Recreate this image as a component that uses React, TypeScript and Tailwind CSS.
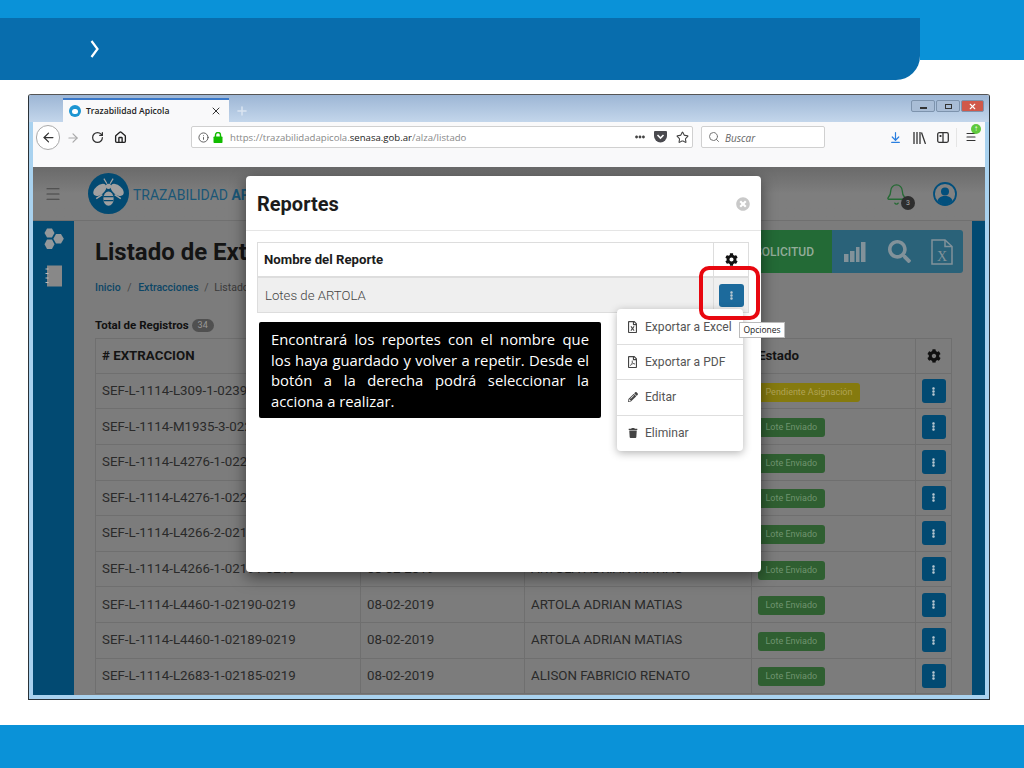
import React from "react";
import { ArrowLeft, ArrowRight, RotateCw, Home, Info, Star, Search, ArrowDownToLine, Plus, X, Bell, Menu } from "lucide-react";
import { FaCog, FaSearch, FaEllipsisV, FaPencilAlt, FaTrash, FaRegFileExcel, FaRegFilePdf, FaTimesCircle, FaEllipsisH } from "react-icons/fa";

const rows = [
  ["SEF-L-1114-L309-1-02391-0219", "08-02-2019", "ARTOLA ADRIAN MATIAS", "Pendiente Asignación"],
  ["SEF-L-1114-M1935-3-02280-0219", "08-02-2019", "ARTOLA ADRIAN MATIAS", "Lote Enviado"],
  ["SEF-L-1114-L4276-1-02211-0219", "08-02-2019", "ARTOLA ADRIAN MATIAS", "Lote Enviado"],
  ["SEF-L-1114-L4276-1-02210-0219", "08-02-2019", "ARTOLA ADRIAN MATIAS", "Lote Enviado"],
  ["SEF-L-1114-L4266-2-02192-0219", "08-02-2019", "ARTOLA ADRIAN MATIAS", "Lote Enviado"],
  ["SEF-L-1114-L4266-1-02191-0219", "08-02-2019", "ARTOLA ADRIAN MATIAS", "Lote Enviado"],
  ["SEF-L-1114-L4460-1-02190-0219", "08-02-2019", "ARTOLA ADRIAN MATIAS", "Lote Enviado"],
  ["SEF-L-1114-L4460-1-02189-0219", "08-02-2019", "ARTOLA ADRIAN MATIAS", "Lote Enviado"],
  ["SEF-L-1114-L2683-1-02185-0219", "08-02-2019", "ALISON FABRICIO RENATO", "Lote Enviado"],
];

function Bee() {
  return (
    <svg width="41" height="41" viewBox="0 0 40 40" className="shrink-0">
      <circle cx="20" cy="20" r="20" fill="#024a72" />
      <g fill="#a0a0a0">
        <ellipse cx="11.500" cy="16.500" rx="7.500" ry="4.500" transform="rotate(-40 11.500 16.500)" />
        <ellipse cx="28.500" cy="16.500" rx="7.500" ry="4.500" transform="rotate(40 28.500 16.500)" />
        <circle cx="20" cy="13" r="2.600" />
        <ellipse cx="20" cy="25" rx="5" ry="7" />
      </g>
      <path d="M15 23h10M15.500 27h9" stroke="#024a72" strokeWidth="1.300" />
      <path d="M18.500 10.500l-3-5M21.500 10.500l3-5" stroke="#a0a0a0" strokeWidth="1.200" />
      <path d="M14 21l-6 4M26 21l6 4" stroke="#a0a0a0" strokeWidth="1.500" />
    </svg>
  );
}

function Honeycomb() {
  return (
    <svg width="22" height="22" viewBox="0 0 22 22" fill="#93989b">
      <polygon points="4,0.5 9,0.5 11.5,5 9,9.5 4,9.5 1.5,5" />
      <polygon points="13,6 18,6 20.8,10.7 18,15.5 13,15.5 10.3,10.7" />
      <polygon points="4,11.5 9,11.5 11.5,16.2 9,21 4,21 1.5,16.2" />
    </svg>
  );
}

function Notebook() {
  return (
    <svg width="18" height="22" viewBox="0 0 18 22">
      <rect x="2" y="0.5" width="15" height="21" fill="#888" />
      <path d="M0.500 4h3M0.500 8.500h3M0.500 13h3M0.500 17.500h3" stroke="#bbb" strokeWidth="1" />
    </svg>
  );
}

function ChartBars() {
  return (
    <svg width="22" height="20" viewBox="0 0 22 20" fill="#82929a">
      <rect x="0" y="12" width="4.500" height="8" />
      <rect x="6" y="9" width="4.500" height="11" />
      <rect x="12" y="5" width="3.500" height="15" />
      <rect x="17" y="0" width="4.500" height="20" />
    </svg>
  );
}

function ExcelFile() {
  return (
    <svg width="22" height="26" viewBox="0 0 22 26" fill="none" stroke="#82929a" strokeWidth="1.500">
      <path d="M1 1h13l7 6.500V25H1z" />
      <path d="M14 1v6.500h7" />
      <text x="11" y="22" textAnchor="middle" fontFamily="'Liberation Serif', serif" fontSize="14" fill="#82929a" stroke="none">X</text>
    </svg>
  );
}

function Pocket() {
  return (
    <svg width="13" height="12" viewBox="0 0 13 12">
      <path d="M1 0h11a1 1 0 0 1 1 1v4a6.500 6.500 0 0 1-13 0V1a1 1 0 0 1 1-1z" fill="#4a4a4f" />
      <path d="M3.500 4l3 3 3-3" stroke="#fff" strokeWidth="1.600" fill="none" />
    </svg>
  );
}

function LockIcon() {
  return (
    <svg width="10" height="11" viewBox="0 0 10 11">
      <rect x="0.500" y="4.500" width="9" height="6.500" rx="0.800" fill="#12bc00" />
      <path d="M2.500 5V3a2.500 2.500 0 0 1 5 0v2" fill="none" stroke="#12bc00" strokeWidth="1.400" />
    </svg>
  );
}

function LibraryIcon() {
  return (
    <svg width="13" height="12" viewBox="0 0 13 12" fill="none" stroke="#333" strokeWidth="1.300">
      <path d="M1 0v12M4 0v12M7 0v12M8.500 0.500l4 11.500" />
    </svg>
  );
}

function SidebarIcon() {
  return (
    <svg width="12" height="11" viewBox="0 0 12 11" fill="none" stroke="#333" strokeWidth="1.300">
      <rect x="0.700" y="0.700" width="10.600" height="9.600" rx="1.500" />
      <path d="M6 1v9" />
      <path d="M3.500 3v2" strokeWidth="1.800" />
    </svg>
  );
}

function UserIcon() {
  return (
    <svg width="24" height="24" viewBox="0 0 24 24">
      <circle cx="12" cy="12" r="11" fill="#828282" stroke="#024f7c" strokeWidth="1.800" />
      <circle cx="12" cy="9.500" r="4" fill="#024f7c" />
      <path d="M4.500 19c.8-3.500 3.500-5 7.500-5s6.700 1.500 7.500 5a10 10 0 0 1-15 0z" fill="#024f7c" />
    </svg>
  );
}

function ActionButton({ className }: { className: string }) {
  return (
    <div className={`flex items-center justify-center rounded-[3px] ${className}`}>
      <FaEllipsisV size={9} color="#b9c8d1" />
    </div>
  );
}

function WinButton({ cls, children }: { cls: string; children: React.ReactNode }) {
  return <div className={`flex h-[12px] items-center justify-center rounded-[2px] border border-[#7d93ad] ${cls}`}>{children}</div>;
}

function MenuItem({ icon, label, last }: { icon: React.ReactNode; label: string; last?: boolean }) {
  return (
    <div className={`flex h-[35.200px] items-center gap-[7px] pl-[10px] text-[12.100px] text-[#555] ${last ? "" : "border-b border-[#dedede]"}`}>
      <span className="flex w-[11px] justify-center text-[#444]">{icon}</span>
      <span>{label}</span>
    </div>
  );
}

export default function App() {
  return (
    <div className="relative h-[768px] w-[1024px] overflow-hidden bg-white font-['Roboto',sans-serif]">
      <div className="h-[18px] bg-[#0a92d8]" />
      <div className="flex items-start">
        <div className="flex h-[62px] w-[920px] items-center rounded-br-[24px] bg-[#086dad] pl-[90px]">
          <svg width="10" height="18" viewBox="0 0 10 18" fill="none" stroke="#fff" strokeWidth="2.200"><path d="M1.500 1l6 8-6 8" /></svg>
        </div>
        <div className="h-[42px] flex-1 bg-[#0a92d8]" />
      </div>

      <div className="ml-[28px] mt-[14px] flex h-[606px] w-[962px] flex-col overflow-hidden rounded-t-[3px] border border-[#2a3238] border-t-[#555]">
        <div className="flex h-[27px] shrink-0 items-end bg-gradient-to-b from-[#9db6d5] to-[#c3d6eb]">
          <div className="ml-[34px] flex h-[24px] w-[166px] items-center border-t-2 border-[#3a78c9] bg-[#f9f9fa] pl-[6px] pr-[7px] text-[8.600px] text-[#222]">
            <span className="flex h-[12px] w-[12px] items-center justify-center rounded-full bg-[#1c95d2]"><span className="h-[5px] w-[6px] rounded-full bg-white" /></span>
            <span className="ml-[5px] flex-1 font-['Open_Sans',sans-serif] font-semibold">Trazabilidad Apicola</span>
            <X size={12} color="#333" />
          </div>
          <Plus size={14} color="#dbe5f1" strokeWidth={2.500} className="mb-[4px] ml-[6px]" />
          <div className="mb-[10px] ml-auto mr-[5px] flex gap-[1px]">
            <WinButton cls="w-[24px] bg-[#a9bdd6]"><span className="mt-[3px] h-[2px] w-[7px] border border-[#333] bg-white" /></WinButton>
            <WinButton cls="w-[24px] bg-[#a9bdd6]"><span className="h-[5px] w-[7px] border border-[#333]" /></WinButton>
            <WinButton cls="w-[23px] bg-[#d0584a]"><X size={9} color="#fff" strokeWidth={3} /></WinButton>
          </div>
        </div>

        <div className="flex min-h-0 flex-1 flex-col bg-[#a9d2ef] px-[4px] pb-[4px]">
          <div className="flex h-[45px] shrink-0 items-start bg-[#f9f9fa] pt-[3px] text-[#333]">
            <div className="ml-[3px] flex h-[25px] w-[24px] items-center justify-center rounded-full border border-[#aaa] bg-white"><ArrowLeft size={15} color="#333" /></div>
            <ArrowRight size={14} color="#aaa" className="ml-[6px] mt-[6px]" />
            <RotateCw size={13} color="#333" strokeWidth={2.300} className="ml-[11px] mt-[6px]" />
            <Home size={13} color="#222" strokeWidth={2.500} className="ml-[10px] mt-[6px]" />
            <div className="ml-[64px] mt-[1px] flex h-[22px] w-[502px] items-center rounded-[2px] border border-[#d0d0d0] bg-white pl-[6px] pr-[3px]">
              <Info size={11} color="#555" />
              <span className="ml-[4px]"><LockIcon /></span>
              <span className="ml-[7px] mt-[2px] flex-1 font-['Open_Sans',sans-serif] text-[9.600px] text-[#888]">https://trazabilidadapicola.<span className="text-[#222]">senasa.gob.ar</span>/alza/listado</span>
              <FaEllipsisH size={10} color="#444" />
              <span className="ml-[9px]"><Pocket /></span>
              <Star size={13} color="#444" strokeWidth={2} className="ml-[9px]" />
            </div>
            <div className="ml-[8px] mt-[1px] flex h-[22px] w-[124px] items-center rounded-[2px] border border-[#d0d0d0] bg-white pl-[6px]">
              <Search size={12} color="#777" />
              <span className="ml-[5px] mt-[2px] font-['Open_Sans',sans-serif] text-[10px] italic text-[#666]">Buscar</span>
            </div>
            <ArrowDownToLine size={13} color="#2a7fe0" strokeWidth={2.200} className="ml-[64px] mt-[6px]" />
            <span className="ml-[11px] mt-[7px]"><LibraryIcon /></span>
            <span className="ml-[11px] mt-[7px]"><SidebarIcon /></span>
            <span className="ml-[7px] mt-[3px] h-[19px] w-px bg-[#e5e5e5]" />
            <div className="relative ml-[8px] mt-[6px]">
              <Menu size={12} color="#333" strokeWidth={2.200} />
              <span className="absolute -right-[4px] -top-[7px] flex h-[10px] w-[10px] items-center justify-center rounded-full bg-[#5fc93e] text-[8px] font-bold leading-none text-white">↑</span>
            </div>
          </div>

          <div className="relative min-h-0 flex-1 overflow-hidden bg-[#7c7c7c]">
            <div className="flex h-[54px] items-center border-b border-[#707070] bg-gradient-to-b from-[#6a6a6a] via-[#7e7e7e] to-[#7e7e7e] to-30% pl-[11px] pr-[28px]">
              <Menu size={18} color="#454545" strokeWidth={1.500} />
              <div className="ml-[26px]"><Bee /></div>
              <span className="ml-[4px] mt-[3px] text-[14px] text-[#1a5676]">TRAZABILIDAD <b>APÍCOLA</b></span>
              <div className="relative ml-auto mt-[2px]">
                <Bell size={23} color="#256a34" strokeWidth={1.400} />
                <span className="absolute -bottom-[4px] -right-[7px] flex h-[14px] w-[14px] items-center justify-center rounded-full bg-[#2e2e2e] text-[7px] text-[#aaa]">3</span>
              </div>
              <span className="ml-[25px]"><UserIcon /></span>
            </div>

            <div className="flex h-[474px]">
              <div className="flex w-[41px] shrink-0 flex-col items-center gap-[15px] bg-[#024a72] pt-[7px]">
                <Honeycomb />
                <Notebook />
              </div>
              <div className="min-w-0 flex-1 overflow-hidden pl-[21px] pr-[9px] pt-[9px]">
                <div className="flex h-[43px] items-stretch justify-between">
                  <h1 className="self-center text-[24px] font-bold leading-none text-[#141414]">Listado de Extracciones</h1>
                  <div className="flex overflow-hidden rounded-r-[3px]">
                    <div className="flex w-[110px] items-center justify-end bg-[#236a36] pr-[18px] text-[12px] font-medium text-[#93ad9a]">SOLICITUD</div>
                    <div className="flex w-[131px] items-center bg-[#2a6279] pl-[12px]">
                      <ChartBars />
                      <span className="ml-[22px]"><FaSearch size={23} color="#82929a" /></span>
                      <span className="ml-[20px]"><ExcelFile /></span>
                    </div>
                  </div>
                </div>
                <div className="mt-[7px] text-[10.500px] font-medium text-[#0d4666]">Inicio <span className="mx-[4px] font-normal text-[#444]">/</span> Extracciones <span className="mx-[3px] font-normal text-[#444]">/</span> <span className="font-normal text-[#3a3a3a]">Listado</span></div>
                <div className="mt-[23px] flex h-[14px] items-center text-[11.500px] font-bold text-[#111]">
                  Total de Registros
                  <span className="ml-[3px] rounded-full bg-[#505050] px-[6px] text-[9px] font-normal leading-[13px] text-[#999]">34</span>
                </div>
                <table className="mt-[5px] w-[857px] table-fixed border-collapse">
                  <thead>
                    <tr className="h-[35px] text-left text-[13.300px] font-bold text-[#141414]">
                      <th className="w-[265px] border border-[#6f6f6f] pl-[6px]"># EXTRACCION</th>
                      <th className="w-[164px] border border-[#6f6f6f] pl-[6px]">Fecha</th>
                      <th className="w-[227px] border border-[#6f6f6f] pl-[6px]">Productor</th>
                      <th className="w-[164px] border border-[#6f6f6f] pl-[6px]">Estado</th>
                      <th className="border border-[#6f6f6f]"><span className="flex justify-center"><FaCog size={14} color="#111" /></span></th>
                    </tr>
                  </thead>
                  <tbody>
                    {rows.map((r, i) => (
                      <tr key={r[0]} className="h-[35.600px] text-[13.300px] text-[#2a2a2a]">
                        <td className="border border-[#6f6f6f] pl-[6px]">{r[0]}</td>
                        <td className="border border-[#6f6f6f] pl-[6px]">{r[1]}</td>
                        <td className="border border-[#6f6f6f] pl-[6px]">{r[2]}</td>
                        <td className="border border-[#6f6f6f] pl-[6px]">
                          <span className={`inline-block h-[19px] rounded-[3px] px-[7.500px] text-[9px] leading-[19px] ${i === 0 ? "bg-[#857a0e] text-[#b0a355]" : "bg-[#2f5f31] text-[#70946f]"}`}>{r[3]}</span>
                        </td>
                        <td className="border border-[#6f6f6f]">
                          <ActionButton className="mx-auto h-[24px] w-[24px] bg-[#024a72]" />
                        </td>
                      </tr>
                    ))}
                  </tbody>
                </table>
              </div>
              <div className="w-[13px] shrink-0 bg-[#024a72]" />
            </div>

            <div className="absolute left-[213px] top-[9px] h-[396px] w-[515px] rounded-[4px] bg-white shadow-[0_5px_15px_rgba(0,0,0,0.5)]">
              <div className="flex h-[55px] items-center justify-between border-b border-[#e5e5e5] px-[11px] pt-[2px]">
                <span className="text-[20px] font-bold text-[#1c1c1c]">Reportes</span>
                <FaTimesCircle size={14} color="#c9c9c9" />
              </div>
              <div className="ml-[11px] mt-[11px] w-[492px] border border-[#ddd]">
                <div className="flex h-[35px] border-b-2 border-[#ddd]">
                  <div className="flex flex-1 items-center pl-[6px] text-[13.200px] font-bold text-[#1c1c1c]">Nombre del Reporte</div>
                  <div className="flex w-[35px] items-center justify-center border-l border-[#ddd]"><FaCog size={13} color="#111" /></div>
                </div>
                <div className="flex h-[34px] bg-[#efefef]">
                  <div className="flex flex-1 items-center pl-[7px] pt-[1px] text-[13.200px] font-light text-[#444]">Lotes de ARTOLA</div>
                  <div className="flex w-[35px] items-center justify-end border-l border-[#ddd] pr-[4px]">
                    <ActionButton className="h-[23px] w-[25px] bg-[#1c6a9c]" />
                  </div>
                </div>
              </div>
              <div className="ml-[13px] mt-[9px] h-[96px] w-[342px] rounded-[2px] bg-black px-[12px] pt-[7px] text-justify font-['Open_Sans',sans-serif] text-[14.800px] leading-[20.500px] text-white">
                Encontrará los reportes con el nombre que los haya guardado y volver a repetir. Desde el botón a la derecha podrá seleccionar la acciona a realizar.
              </div>

              <div className="absolute left-[371px] top-[133px] h-[142px] w-[126px] rounded-[4px] bg-white pt-[1px] shadow-[0_2px_8px_rgba(0,0,0,0.3)]">
                <MenuItem icon={<FaRegFileExcel size={12} />} label="Exportar a Excel" />
                <MenuItem icon={<FaRegFilePdf size={12} />} label="Exportar a PDF" />
                <MenuItem icon={<FaPencilAlt size={10} />} label="Editar" />
                <MenuItem icon={<FaTrash size={10} />} label="Eliminar" last />
              </div>
              <div className="absolute left-[453px] top-[90px] h-[54px] w-[61px] rounded-[10px] border-[4px] border-[#e8070f]" />
              <div className="absolute left-[493px] top-[146px] flex h-[16px] w-[46px] items-center justify-center border border-[#bbb] bg-white font-['Open_Sans',sans-serif] text-[8.500px] text-[#222]">Opciones</div>
            </div>
          </div>
        </div>
      </div>

      <div className="mt-[25px] h-[43px] bg-[#0a92d8]" />
    </div>
  );
}
